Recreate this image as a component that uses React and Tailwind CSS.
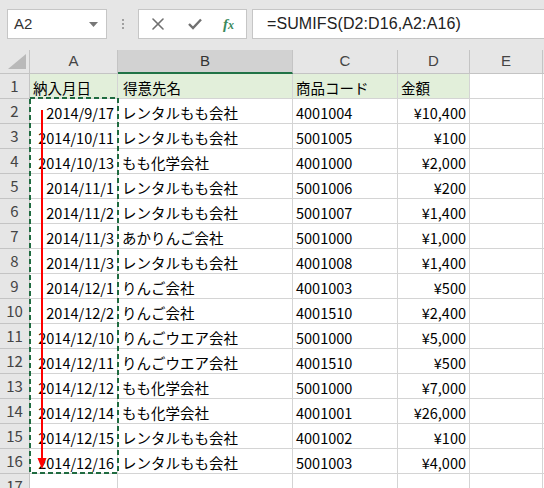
import React from 'react'

const rows = [
  ['2014/9/17', 'レンタルもも会社', '4001004', '¥10,400'],
  ['2014/10/11', 'レンタルもも会社', '5001005', '¥100'],
  ['2014/10/13', 'もも化学会社', '4001000', '¥2,000'],
  ['2014/11/1', 'レンタルもも会社', '5001006', '¥200'],
  ['2014/11/2', 'レンタルもも会社', '5001007', '¥1,400'],
  ['2014/11/3', 'あかりんご会社', '5001000', '¥1,000'],
  ['2014/11/3', 'レンタルもも会社', '4001008', '¥1,400'],
  ['2014/12/1', 'りんご会社', '4001003', '¥500'],
  ['2014/12/2', 'りんご会社', '4001510', '¥2,400'],
  ['2014/12/10', 'りんごウエア会社', '5001000', '¥5,000'],
  ['2014/12/11', 'りんごウエア会社', '4001510', '¥500'],
  ['2014/12/12', 'もも化学会社', '5001000', '¥7,000'],
  ['2014/12/14', 'もも化学会社', '4001001', '¥26,000'],
  ['2014/12/15', 'レンタルもも会社', '4001002', '¥100'],
  ['2014/12/16', 'レンタルもも会社', '5001003', '¥4,000'],
]

const cell = 'h-[25px] border-r border-b border-[#d4d4d4] flex items-center pt-[3px] px-[3px] whitespace-nowrap overflow-hidden text-[14.5px] text-black'
const rowHead = 'h-[25px] border-r border-b border-[#c4c4c4] bg-[#e6e6e6] flex items-center justify-center pt-[1px] text-[15px] text-[#444]'
const colHead = 'h-[24px] border-r border-b border-[#c4c4c4] bg-[#e6e6e6] flex items-center justify-center text-[15px] text-[#444]'

export default function App() {
  return (
    <div className="w-[544px] h-[488px] overflow-hidden bg-white" style={{ fontFamily: '"Noto Sans CJK JP", "Noto Sans", sans-serif' }}>
      {/* formula bar */}
      <div className="h-[50px] bg-[#e6e6e6] flex items-start pt-[9px]">
        <div className="ml-[7px] w-[100px] h-[30px] bg-white border border-[#c6c6c6] flex items-center justify-between pl-[6px] pr-[8px]">
          <span className="text-[15px] text-[#333] font-['Liberation_Sans']">A2</span>
          <svg width="9" height="5" viewBox="0 0 9 5"><polygon points="0,0 9,0 4.5,5" fill="#777" /></svg>
        </div>
        <div className="w-[31px] h-[30px] flex flex-col items-center justify-center gap-[2px]">
          <span className="w-[2px] h-[2px] bg-[#a0a0a0]" />
          <span className="w-[2px] h-[2px] bg-[#a0a0a0]" />
          <span className="w-[2px] h-[2px] bg-[#a0a0a0]" />
        </div>
        <div className="w-[109px] h-[30px] bg-white border border-[#c6c6c6] flex items-center">
          <svg className="ml-[13px]" width="12" height="12" viewBox="0 0 12 12" stroke="#707070" strokeWidth="1.6" strokeLinecap="round">
            <line x1="1" y1="1" x2="11" y2="11" />
            <line x1="11" y1="1" x2="1" y2="11" />
          </svg>
          <svg className="ml-[24px]" width="14" height="12" viewBox="0 0 14 12" fill="none" stroke="#707070" strokeWidth="2.4" strokeLinejoin="miter">
            <polyline points="1,6 5,10 13,1.5" />
          </svg>
          <span className="ml-[21px] text-[15px] italic font-bold text-[#3a8a5c] font-['Liberation_Serif']">f<span className="text-[12px]">x</span></span>
        </div>
        <div className="ml-[5px] flex-1 h-[30px] bg-white border-y border-l border-[#c6c6c6] flex items-center pl-[14px]">
          <span className="text-[16px] font-medium text-[#222] font-['Liberation_Sans'] tracking-[0.1px]">=SUMIFS(D2:D16,A2:A16)</span>
        </div>
      </div>

      {/* sheet */}
      <div className="relative grid grid-cols-[30px_88px_175px_105px_72px_73px_1fr]">
        <div className={colHead + ' items-end justify-end pr-[3px] pb-[4px]'}>
          <svg width="18" height="15" viewBox="0 0 18 15"><polygon points="18,0 18,15 0,15" fill="#b9b9b9" /></svg>
        </div>
        <div className={colHead + ' font-["Liberation_Sans"]'}>A</div>
        <div className="h-[24px] border-r border-[#c4c4c4] border-b-2 border-b-[#217346] bg-[#d2d2d2] flex items-center justify-center text-[15px] text-[#333] font-['Liberation_Sans']">B</div>
        <div className={colHead + ' font-["Liberation_Sans"]'}>C</div>
        <div className={colHead + ' font-["Liberation_Sans"]'}>D</div>
        <div className={colHead + ' font-["Liberation_Sans"]'}>E</div>
        <div className="h-[24px] border-b border-[#c4c4c4] bg-[#e6e6e6]" />

        <div className={rowHead}>1</div>
        <div className={cell + ' bg-[#e2efda]'}>納入月日</div>
        <div className={cell + ' bg-[#e2efda] pl-[5px]'}>得意先名</div>
        <div className={cell + ' bg-[#e2efda]'}>商品コード</div>
        <div className={cell + ' bg-[#e2efda]'}>金額</div>
        <div className={cell} />
        <div className={cell + ' border-r-0'} />

        {rows.map((r, i) => (
          <React.Fragment key={i}>
            <div className={rowHead}>{i + 2}</div>
            <div className={cell + ' justify-end px-[1px]'}>{r[0]}</div>
            <div className={cell + ' pl-[4px]'}>{r[1]}</div>
            <div className={cell}>{r[2]}</div>
            <div className={cell + ' justify-end'}>{r[3]}</div>
            <div className={cell} />
            <div className={cell + ' border-r-0'} />
          </React.Fragment>
        ))}

        <div className={rowHead}>17</div>
        <div className={cell} />
        <div className={cell} />
        <div className={cell} />
        <div className={cell} />
        <div className={cell} />
        <div className={cell + ' border-r-0'} />

        {/* copy marquee around A2:A16 */}
        <svg className="absolute left-[29px] top-[47px] pointer-events-none" width="91" height="378">
          <rect x="1" y="1" width="88" height="375" fill="none" stroke="#1f6b40" strokeWidth="2" strokeDasharray="5 3" />
        </svg>
        {/* red arrow */}
        <svg className="absolute left-[36px] top-[60px] pointer-events-none" width="12" height="360">
          <line x1="6" y1="0" x2="6" y2="352" stroke="#ff0000" strokeWidth="2" />
          <polygon points="1.5,348 10.5,348 6,359" fill="#ff0000" />
        </svg>
      </div>
    </div>
  )
}
